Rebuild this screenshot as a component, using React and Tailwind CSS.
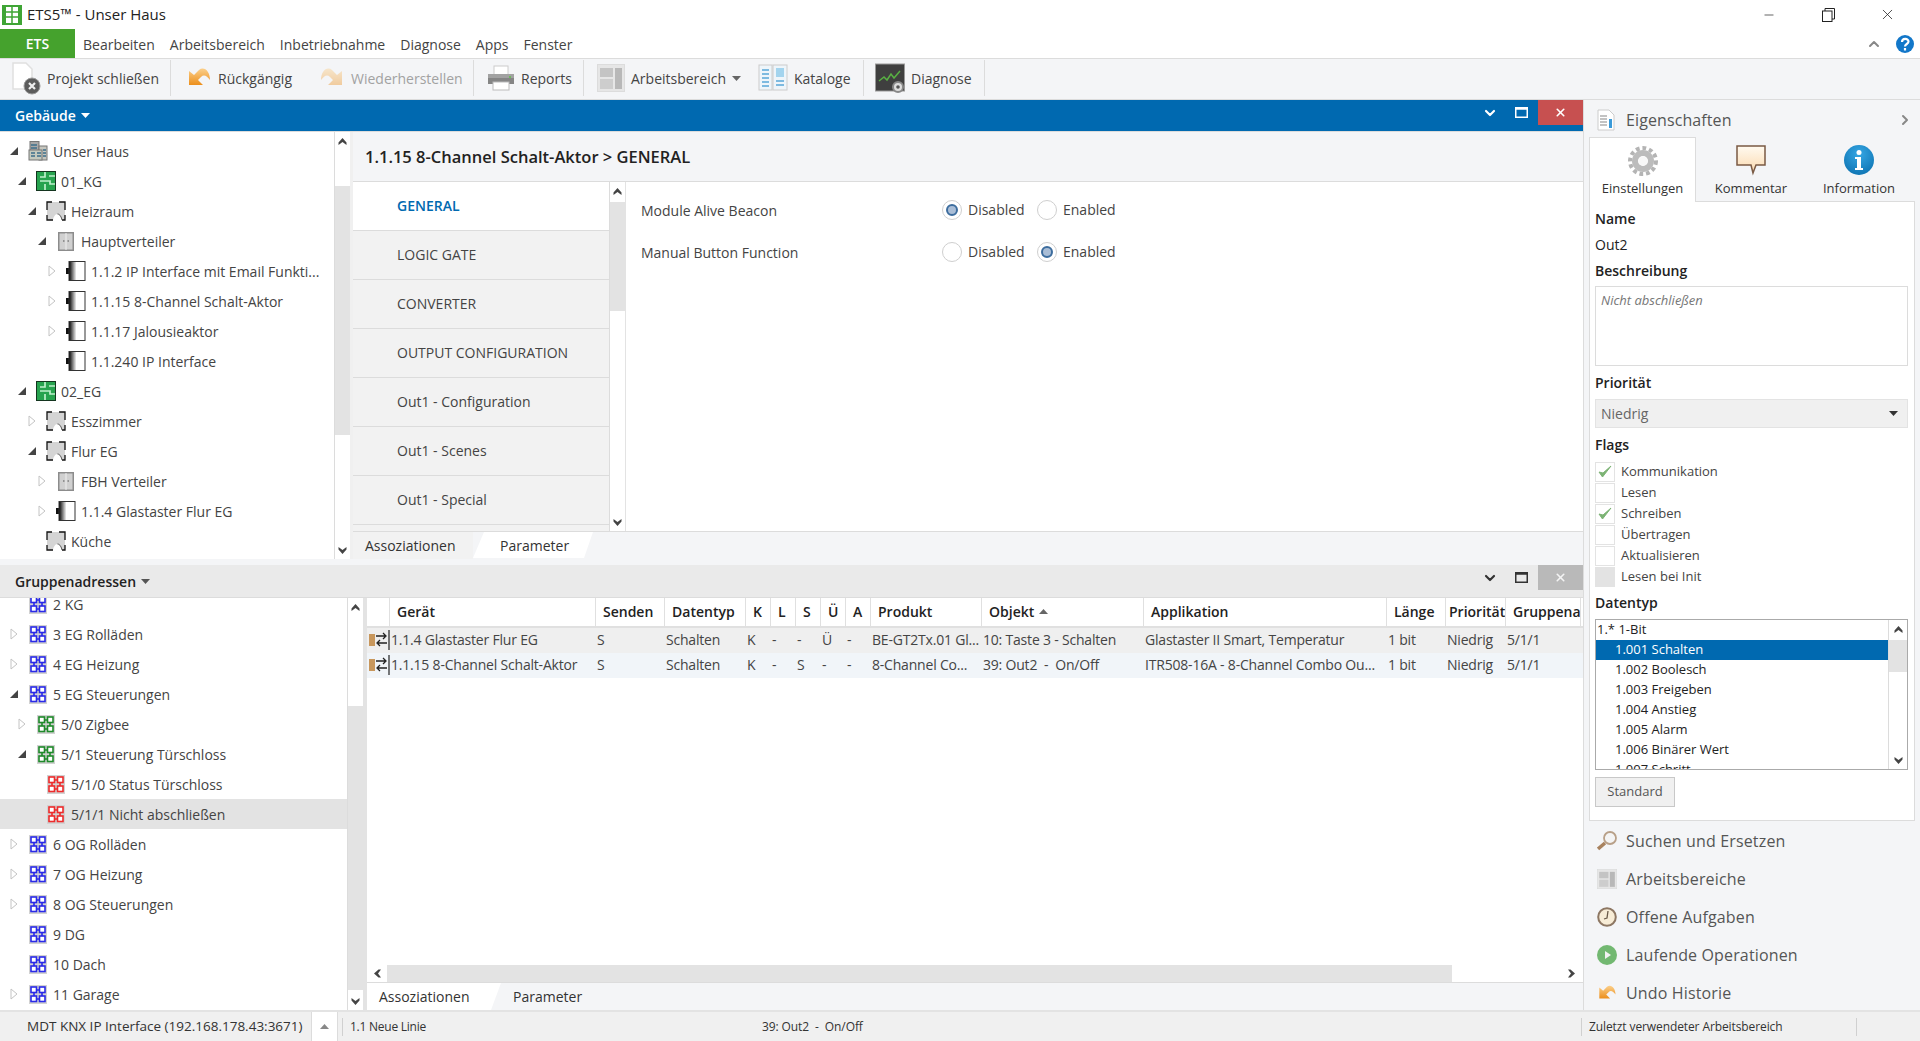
import React from 'react';
import { ChevronRight, ChevronUp, ChevronDown, X, Minus } from 'lucide-react';

const levelPad = ['pl-[10px]', 'pl-[18px]', 'pl-[28px]', 'pl-[38px]', 'pl-[48px]'];

const topTree = [
  { level: 0, state: 'open', icon: 'building', text: 'Unser Haus' },
  { level: 1, state: 'open', icon: 'floor', text: '01_KG' },
  { level: 2, state: 'open', icon: 'room', text: 'Heizraum' },
  { level: 3, state: 'open', icon: 'cabinet', text: 'Hauptverteiler' },
  { level: 4, state: 'closed', icon: 'device', text: '1.1.2 IP Interface mit Email Funkti...' },
  { level: 4, state: 'closed', icon: 'device', text: '1.1.15 8-Channel Schalt-Aktor' },
  { level: 4, state: 'closed', icon: 'device', text: '1.1.17 Jalousieaktor' },
  { level: 4, state: 'none', icon: 'device', text: '1.1.240 IP Interface' },
  { level: 1, state: 'open', icon: 'floor', text: '02_EG' },
  { level: 2, state: 'closed', icon: 'room', text: 'Esszimmer' },
  { level: 2, state: 'open', icon: 'room', text: 'Flur EG' },
  { level: 3, state: 'closed', icon: 'cabinet', text: 'FBH Verteiler' },
  { level: 3, state: 'closed', icon: 'device', text: '1.1.4 Glastaster Flur EG' },
  { level: 2, state: 'none', icon: 'room', text: 'Küche' },
];

const groupTree = [
  { level: 0, state: 'none', icon: 'blue', text: '2 KG' },
  { level: 0, state: 'closed', icon: 'blue', text: '3 EG Rolläden' },
  { level: 0, state: 'closed', icon: 'blue', text: '4 EG Heizung' },
  { level: 0, state: 'open', icon: 'blue', text: '5 EG Steuerungen' },
  { level: 1, state: 'closed', icon: 'green', text: '5/0 Zigbee' },
  { level: 1, state: 'open', icon: 'green', text: '5/1 Steuerung Türschloss' },
  { level: 2, state: 'none', icon: 'red', text: '5/1/0 Status Türschloss' },
  { level: 2, state: 'none', icon: 'red', text: '5/1/1 Nicht abschließen', selected: true },
  { level: 0, state: 'closed', icon: 'blue', text: '6 OG Rolläden' },
  { level: 0, state: 'closed', icon: 'blue', text: '7 OG Heizung' },
  { level: 0, state: 'closed', icon: 'blue', text: '8 OG Steuerungen' },
  { level: 0, state: 'none', icon: 'blue', text: '9 DG' },
  { level: 0, state: 'none', icon: 'blue', text: '10 Dach' },
  { level: 0, state: 'closed', icon: 'blue', text: '11 Garage' },
];

const navItems = ['GENERAL', 'LOGIC GATE', 'CONVERTER', 'OUTPUT CONFIGURATION', 'Out1 - Configuration', 'Out1 - Scenes', 'Out1 - Special'];

const tableHead = ['', 'Gerät', 'Senden', 'Datentyp', 'K', 'L', 'S', 'Ü', 'A', 'Produkt', 'Objekt', 'Applikation', 'Länge', 'Priorität', 'Gruppena'];
const tableRows = [
  ['1.1.4 Glastaster Flur EG', 'S', 'Schalten', 'K', '-', '-', 'Ü', '-', 'BE-GT2Tx.01 Gl...', '10: Taste 3 - Schalten', 'Glastaster II Smart, Temperatur', '1 bit', 'Niedrig', '5/1/1'],
  ['1.1.15 8-Channel Schalt-Aktor', 'S', 'Schalten', 'K', '-', 'S', '-', '-', '8-Channel Co...', '39: Out2  -  On/Off', 'ITR508-16A - 8-Channel Combo Ou...', '1 bit', 'Niedrig', '5/1/1'],
];
const gridCols = 'grid-cols-[23px_206px_69px_81px_25px_25px_25px_25px_25px_111px_162px_243px_59px_60px_75px]';

const flags = [
  { label: 'Kommunikation', checked: true },
  { label: 'Lesen' },
  { label: 'Schreiben', checked: true },
  { label: 'Übertragen' },
  { label: 'Aktualisieren' },
  { label: 'Lesen bei Init', disabled: true },
];

const dataTypes = ['1.002 Boolesch', '1.003 Freigeben', '1.004 Anstieg', '1.005 Alarm', '1.006 Binärer Wert', '1.007 Schritt'];

// --- small drawn icons ---
const BuildingIcon = () => (
  <svg width="20" height="20" viewBox="0 0 20 20">
    <rect x="2" y="0.500" width="9" height="18" fill="#a8a8a8" stroke="#777" />
    <rect x="11" y="5" width="8" height="14" fill="#c6c6be" stroke="#777" />
    <rect x="1" y="9" width="13" height="10" fill="#c4cabe" stroke="#777" />
    <path d="M3 12h4M3 15h4M9 12h4M9 15h4M3 4h6M3 7h6" stroke="#3d6f8a" strokeWidth="1.500" />
    <path d="M15 9h3M15 12h3M15 15h3" stroke="#3d6f8a" strokeWidth="1.500" />
  </svg>
);

const FloorIcon = () => (
  <svg width="20" height="20" viewBox="0 0 20 20">
    <rect x="0.500" y="0.500" width="19" height="19" fill="#27a34f" stroke="#14351f" />
    <path d="M9 1v5H4M9 13v6M4 10h10v3h5M13 5h6" stroke="#bff0cc" strokeWidth="1.700" fill="none" />
  </svg>
);

const RoomIcon = () => (
  <svg width="20" height="20" viewBox="0 0 20 20">
    <rect x="1" y="1" width="18" height="18" fill="#d4d4d4" />
    <path d="M7 19.500c0-3 2-6.500 4.500-6.500s4 3.500 4.500 6.500z" fill="#fff" />
    <path d="M1 9V1h5M13 1h6v8M19 14v5h-3M1 14v5h6" stroke="#111" strokeWidth="1.300" fill="none" />
    <path d="M11.500 13c2.500 0 4 3.500 4.500 6" stroke="#555" strokeWidth="1" fill="none" />
  </svg>
);

const CabinetIcon = () => (
  <svg width="16" height="19" viewBox="0 0 16 19">
    <rect x="0.750" y="0.750" width="14.500" height="17.500" fill="#d0d0d0" stroke="#8c8c8c" strokeWidth="1.500" />
    <path d="M8 1v17" stroke="#f0f0f0" />
    <path d="M5 9h1.500M9.500 9h1.500" stroke="#555" />
  </svg>
);

const DeviceIcon = () => (
  <svg width="20" height="20" viewBox="0 0 20 20">
    <defs>
      <linearGradient id="devGrad" x1="0" x2="1" y1="0" y2="0">
        <stop offset="0" stopColor="#000" />
        <stop offset="1" stopColor="#eee" />
      </linearGradient>
    </defs>
    <rect x="0" y="7" width="3" height="6" fill="#111" />
    <rect x="3" y="0.500" width="7" height="19" fill="url(#devGrad)" />
    <rect x="3" y="0.500" width="16" height="19" fill="none" stroke="#333" />
  </svg>
);

const GroupIcon = ({ color }) => (
  <svg width="18" height="19" viewBox="0 0 18 19">
    <rect width="18" height="19" fill="#d2d2d2" />
    <g fill="#fff" stroke={color} strokeWidth="1.600">
      <rect x="2" y="2" width="5.500" height="5.500" />
      <rect x="10.500" y="2" width="5.500" height="5.500" />
      <rect x="2" y="11" width="5.500" height="5.500" />
      <rect x="10.500" y="11" width="5.500" height="5.500" />
    </g>
    <path d="M7.500 5h3M7.500 14h3M5 7.500V11M13 7.500V11" stroke={color} strokeWidth="1.600" />
  </svg>
);

const treeIcons = {
  building: <BuildingIcon />,
  floor: <FloorIcon />,
  room: <RoomIcon />,
  cabinet: <CabinetIcon />,
  device: <DeviceIcon />,
  blue: <GroupIcon color="#2a2ae8" />,
  green: <GroupIcon color="#1f8a2a" />,
  red: <GroupIcon color="#ee2b2b" />,
};

const Toggle = ({ state }) => (
  <span className="w-[8px] h-[12px] flex items-center justify-center">
    {state === 'open' && (
      <svg width="8" height="8" viewBox="0 0 8 8"><path d="M8 0v8H0z" fill="#444" /></svg>
    )}
    {state === 'closed' && (
      <svg width="8" height="12" viewBox="0 0 8 12"><path d="M1 1l6 5-6 5z" fill="#fff" stroke="#c4c4c4" /></svg>
    )}
  </span>
);

const TreeRow = ({ row }) => (
  <div className={`h-[30px] flex items-center whitespace-nowrap ${levelPad[row.level]} ${row.selected ? 'bg-[#e3e3e3]' : ''}`}>
    <Toggle state={row.state} />
    <span className="w-[10px]" />
    <span className="w-[20px] flex items-center justify-center">{treeIcons[row.icon]}</span>
    <span className="ml-[5px]">{row.text}</span>
  </div>
);

const ArrowUp = () => (
  <svg width="9" height="7" viewBox="0 0 9 7"><path d="M4.500 0L8.500 4.500V7L4.500 4 .5 7V4.500z" fill="#444" /></svg>
);
const ArrowDown = () => (
  <svg width="9" height="7" viewBox="0 0 9 7"><path d="M4.500 7L.5 2.500V0l4 3 4-3v2.500z" fill="#444" /></svg>
);
const ArrowLeft = () => (
  <svg width="7" height="9" viewBox="0 0 7 9"><path d="M0 4.500L4.500 .5H7L4 4.500 7 8.500H4.500z" fill="#444" /></svg>
);
const ArrowRight = () => (
  <svg width="7" height="9" viewBox="0 0 7 9"><path d="M7 4.500L2.500 .5H0l3 4-3 4h2.500z" fill="#444" /></svg>
);

const Caret = ({ color = '#fff', className = '' }) => (
  <svg width="9" height="5" viewBox="0 0 9 5" className={className}><path d="M0 0h9L4.500 5z" fill={color} /></svg>
);

const PaneControls = ({ closeBg, dark, closeFg }) => (
  <div className="flex items-start h-full">
    <ChevronDown size={16} strokeWidth={3.200} color={dark} className="mt-[5px]" />
    <span className="w-[17px]" />
    <svg width="13" height="11" viewBox="0 0 13 11" className="mt-[7px]">
      <rect x="0.750" y="0.750" width="11.500" height="9.500" fill="none" stroke={dark} strokeWidth="1.500" />
      <rect x="0.750" y="0.750" width="11.500" height="2" fill={dark} />
    </svg>
    <span className="w-[10px]" />
    <div className={`w-[45px] h-[25px] flex items-center justify-center ${closeBg}`}>
      <X size={13} strokeWidth={3} color={closeFg} />
    </div>
  </div>
);

const PageIcon = () => (
  <svg width="30" height="34" viewBox="0 0 30 34">
    <path d="M2 2h13l6 6v20H2z" fill="#fff" stroke="#e0e0e0" strokeWidth="1.500" />
    <circle cx="21" cy="25" r="8" fill="#5c5c5c" stroke="#9a9a9a" />
    <path d="M18 22l6 6M24 22l-6 6" stroke="#eee" strokeWidth="2.200" />
  </svg>
);

const arrowPath = 'M24 15C24 6 18 1 13 5L8 10 3 6v14h14l-5-5 3-3c3-3 6-1 9 3z';

const UndoIcon = ({ size = 26 }) => (
  <svg width={size} height={size} viewBox="0 0 26 26">
    <defs>
      <linearGradient id="undoGrad" x1="0" x2="0" y1="0" y2="1">
        <stop offset="0" stopColor="#fbcf8a" />
        <stop offset="1" stopColor="#ec8f1c" />
      </linearGradient>
    </defs>
    <path d={arrowPath} fill="url(#undoGrad)" />
  </svg>
);

const RedoIcon = () => (
  <svg width="26" height="26" viewBox="0 0 26 26" className="opacity-40 -scale-x-100">
    <path d={arrowPath} fill="url(#undoGrad)" />
  </svg>
);

const PrinterIcon = () => (
  <svg width="28" height="26" viewBox="0 0 28 26">
    <rect x="7" y="1" width="14" height="9" fill="#fff" stroke="#ccc" />
    <rect x="1" y="9" width="26" height="10" fill="#a2a2a2" />
    <rect x="1" y="13" width="26" height="6" fill="#858585" />
    <rect x="6" y="17" width="16" height="8" fill="#fff" stroke="#bbb" />
    <rect x="22" y="11" width="2" height="2" fill="#6dbb5c" />
  </svg>
);

const LayoutIcon = ({ size = 28 }) => (
  <svg width={size} height={size} viewBox="0 0 28 28">
    <rect x="0.500" y="0.500" width="27" height="27" fill="#e6e6e6" stroke="#dcdcdc" />
    <rect x="3" y="4" width="13" height="9" fill="#c4c4c4" />
    <rect x="3" y="15" width="13" height="10" fill="#cdcdcd" />
    <rect x="18" y="4" width="7" height="21" fill="#b8b8b8" />
  </svg>
);

const BookIcon = () => (
  <svg width="30" height="28" viewBox="0 0 30 28">
    <rect x="1" y="1" width="13" height="25" fill="#eef5fa" stroke="#ccc" />
    <rect x="15" y="1" width="14" height="25" fill="#eef5fa" stroke="#ccc" />
    <path d="M4 6h7M4 10h7M4 14h7M4 18h7M4 22h7" stroke="#58a6d8" strokeWidth="1.400" />
    <rect x="18" y="4" width="8" height="9" fill="#a3d4ee" />
    <path d="M18 17h8M18 21h8" stroke="#58a6d8" strokeWidth="1.400" />
  </svg>
);

const ChartIcon = () => (
  <svg width="30" height="30" viewBox="0 0 30 30">
    <rect x="0.500" y="1" width="29" height="27" fill="#3f3f3f" stroke="#999" />
    <path d="M4 18l5-4 3 3 4-6 3 4 6-7" stroke="#58b043" strokeWidth="1.500" fill="none" />
    <circle cx="23" cy="24" r="5" fill="#ddd" stroke="#888" strokeWidth="2" />
    <circle cx="23" cy="24" r="1.800" fill="#555" />
  </svg>
);

const AppLogo = () => (
  <svg width="20" height="20" viewBox="0 0 20 20">
    <rect width="20" height="20" fill="#3fa535" />
    <rect x="4" y="2" width="12" height="16" fill="#fff" />
    <path d="M10 2v16M4 7h12M4 12h12" stroke="#3fa535" strokeWidth="1.500" />
  </svg>
);

const GearIcon = () => (
  <svg width="30" height="30" viewBox="0 0 30 30">
    <circle cx="15" cy="15" r="13" fill="none" stroke="#b4b4b4" strokeWidth="4" strokeDasharray="3.800 2.900" />
    <circle cx="15" cy="15" r="8" fill="none" stroke="#bcbcbc" strokeWidth="6" />
    <circle cx="15" cy="15" r="4.500" fill="#f8f8f8" />
  </svg>
);

const CommentIcon = () => (
  <svg width="30" height="32" viewBox="0 0 30 32">
    <defs>
      <linearGradient id="noteGrad" x1="0" x2="0" y1="0" y2="1">
        <stop offset="0" stopColor="#fffaf0" />
        <stop offset="1" stopColor="#fbd9ae" />
      </linearGradient>
    </defs>
    <path d="M1 2h28v19H20l-3 8-2-8H1z" fill="url(#noteGrad)" stroke="#7a5a44" strokeWidth="1.500" />
  </svg>
);

const InfoIcon = () => (
  <svg width="30" height="30" viewBox="0 0 30 30">
    <defs>
      <radialGradient id="infoGrad" cx="0.500" cy="0.300" r="0.800">
        <stop offset="0" stopColor="#36a7e4" />
        <stop offset="1" stopColor="#0a6fae" />
      </radialGradient>
    </defs>
    <circle cx="15" cy="15" r="15" fill="url(#infoGrad)" />
    <circle cx="15" cy="7.500" r="2.500" fill="#fff" />
    <path d="M11 12h6v11h2v2h-8v-2h2v-9h-2z" fill="#fff" />
  </svg>
);

const HelpIcon = () => (
  <svg width="18" height="18" viewBox="0 0 18 18">
    <circle cx="9" cy="9" r="9" fill="#1277c9" />
    <path d="M6 7c0-4 6.500-4 6.500-.500 0 2.500-3.500 2.500-3.500 5" fill="none" stroke="#fff" strokeWidth="2.200" />
    <rect x="7.900" y="13" width="2.200" height="2.500" fill="#fff" />
  </svg>
);

const PropsIcon = () => (
  <svg width="18" height="22" viewBox="0 0 18 22">
    <path d="M1 1h11l5 5v15H1z" fill="#fff" stroke="#ccc" />
    <path d="M3 7h7M3 10h7M3 13h7M3 16h7" stroke="#888" strokeWidth="1.200" />
    <rect x="12" y="10" width="3" height="9" fill="#3a9ad9" />
  </svg>
);

const SearchIcon = () => (
  <svg width="20" height="22" viewBox="0 0 20 22">
    <circle cx="13" cy="8" r="6" fill="#f4f4f4" stroke="#b8a088" strokeWidth="1.800" />
    <path d="M8 13l-7 6" stroke="#a8825e" strokeWidth="3.500" />
  </svg>
);

const ClockIcon = () => (
  <svg width="20" height="20" viewBox="0 0 20 20">
    <circle cx="10" cy="10" r="8.800" fill="#f7ecd6" stroke="#8d7763" strokeWidth="2" />
    <path d="M11 4l-1 7-3 1" stroke="#6a5a48" strokeWidth="1.300" fill="none" />
  </svg>
);

const PlayIcon = () => (
  <svg width="20" height="20" viewBox="0 0 20 20">
    <circle cx="10" cy="10" r="10" fill="#72b871" />
    <path d="M8 6l6 4-6 4z" fill="#f2f2f2" />
  </svg>
);

const CheckIcon = () => (
  <svg width="14" height="14" viewBox="0 0 14 14">
    <path d="M1 7l3.500 5L13 1 5 8z" fill="#7cb374" stroke="#7cb374" strokeLinejoin="round" />
  </svg>
);

const Radio = ({ checked }) => (
  <span className="w-[20px] h-[20px] rounded-full border border-[#cfcfcf] bg-white flex items-center justify-center">
    {checked && <span className="w-[12px] h-[12px] rounded-full bg-[#a9bdd6] border-2 border-[#3d6d9e]" />}
  </span>
);

const RadioRow = ({ label, selected, className }) => (
  <div className={`flex items-center ${className}`}>
    <span className="w-[316px] pl-[15px] translate-y-[1px]">{label}</span>
    <Radio checked={selected === 0} />
    <span className="ml-[6px] w-[69px]">Disabled</span>
    <Radio checked={selected === 1} />
    <span className="ml-[6px]">Enabled</span>
  </div>
);

const ToolButton = ({ icon, label, className = '', muted, children }) => (
  <div className={`flex items-center h-full ${className}`}>
    {icon}
    <span className={`ml-[6px] ${muted ? 'text-[#a2a2a2]' : 'text-[#444]'}`}>{label}</span>
    {children}
  </div>
);

const ToolSep = () => <span className="w-px h-[36px] bg-[#dcdcdc]" />;

const PaneTabs = ({ active }) => (
  <div className="h-[27px] flex bg-[#f4f5f7]">
    {active === 'left' ? (
      <>
        <div className="w-[134px] h-[27px] bg-white pl-[12px] flex items-center [clip-path:polygon(0_0,100%_0,calc(100%-10px)_100%,0_100%)]">Assoziationen</div>
        <div className="ml-[12px] flex items-center">Parameter</div>
      </>
    ) : (
      <>
        <div className="w-[120px] bg-[#f2f2f2] pl-[12px] flex items-center">Assoziationen</div>
        <div className="w-[120px] h-[26px] bg-white pl-[27px] flex items-center [clip-path:polygon(11px_0,100%_0,calc(100%-9px)_100%,0_100%)]">Parameter</div>
      </>
    )}
  </div>
);

const VScroll = ({ top, thumb, className }) => (
  <div className={`w-[16px] flex flex-col items-center bg-white border-l border-[#dcdcdc] ${className}`}>
    <div className={`w-full flex justify-center pt-[6px] shrink-0 ${top}`}><ArrowUp /></div>
    <div className={`w-full shrink-0 bg-[#e3e3e3] ${thumb}`} />
    <div className="flex-1" />
    <div className="pb-[5px]"><ArrowDown /></div>
  </div>
);

export default function App() {
  return (
    <div className="w-[1920px] h-[1041px] overflow-hidden flex flex-col bg-[#f4f5f7] text-[#333] text-[14px] font-['Open_Sans',sans-serif]">
      {/* Title bar */}
      <div className="h-[29px] bg-white flex items-center shrink-0">
        <span className="ml-[2px]"><AppLogo /></span>
        <span className="ml-[5px] text-[15px] text-[#222]">ETS5™ - Unser Haus</span>
        <div className="ml-auto flex items-center text-[#222]">
          <Minus size={14} strokeWidth={1.200} />
          <span className="w-[46px]" />
          <svg width="13" height="14" viewBox="0 0 13 14">
            <rect x="0.500" y="3" width="9.500" height="10.500" fill="#fff" stroke="#222" />
            <path d="M3 3V.5h9.500v10.500H10" fill="none" stroke="#222" />
          </svg>
          <span className="w-[44px]" />
          <X size={17} strokeWidth={1.100} className="mr-[24px]" />
        </div>
      </div>

      {/* Menu */}
      <div className="h-[30px] bg-white flex items-center shrink-0 border-b border-[#dcdcdc]">
        <div className="w-[75px] h-full bg-[#45a22d] text-white font-semibold flex items-center justify-center">ETS</div>
        <div className="ml-[8px] pt-[2px] flex gap-[15px] text-[#444]">
          <span>Bearbeiten</span>
          <span>Arbeitsbereich</span>
          <span>Inbetriebnahme</span>
          <span>Diagnose</span>
          <span>Apps</span>
          <span>Fenster</span>
        </div>
        <div className="ml-auto flex items-center">
          <ChevronUp size={16} strokeWidth={3} color="#888" />
          <span className="w-[14px]" />
          <HelpIcon />
          <span className="w-[6px]" />
        </div>
      </div>

      {/* Toolbar */}
      <div className="h-[41px] pb-[2px] flex items-center bg-[#f4f5f7] shrink-0 border-b border-[#dcdcdc]">
        <ToolButton icon={<PageIcon />} label="Projekt schließen" className="w-[170px] pl-[11px]" />
        <ToolSep />
        <ToolButton icon={<UndoIcon />} label="Rückgängig" className="w-[148px] pl-[15px]" />
        <ToolButton icon={<RedoIcon />} label="Wiederherstellen" muted className="w-[154px]" />
        <ToolSep />
        <ToolButton icon={<PrinterIcon />} label="Reports" className="w-[109px] pl-[13px]" />
        <ToolSep />
        <ToolButton icon={<LayoutIcon />} label="Arbeitsbereich" className="w-[174px] pl-[13px]">
          <Caret color="#666" className="ml-[6px]" />
        </ToolButton>
        <ToolButton icon={<BookIcon />} label="Kataloge" className="w-[105px]" />
        <ToolSep />
        <ToolButton icon={<ChartIcon />} label="Diagnose" className="w-[120px] pl-[11px]" />
        <ToolSep />
      </div>

      <div className="flex-1 flex min-h-0">
        {/* Left side */}
        <div className="w-[1583px] flex flex-col shrink-0">
          {/* Upper pane */}
          <div className="h-[32px] bg-[#0069b0] border-b border-[#dcdcdc] flex items-start justify-between shrink-0">
            <div className="pl-[15px] h-full flex items-center text-white font-semibold gap-[5px]">
              <span>Gebäude</span>
              <Caret />
            </div>
            <PaneControls closeBg="bg-[#c75050]" dark="#fff" closeFg="#fff" />
          </div>

          <div className="h-[427px] flex shrink-0">
            <div className="w-[334px] bg-white pt-[4px] overflow-hidden text-[#444]">
              {topTree.map((row, i) => <TreeRow key={i} row={row} />)}
            </div>
            <VScroll top="h-[54px]" thumb="h-[249px]" />
            <div className="w-[3px] bg-[#f0f0f0]" />
            <div className="flex-1 flex flex-col min-w-0">
              <div className="h-[50px] pt-[2px] border-b border-[#dcdcdc] pl-[12px] flex items-center text-[16.500px] font-semibold text-[#222] shrink-0">
                1.1.15 8-Channel Schalt-Aktor &gt; GENERAL
              </div>
              <div className="flex-1 flex bg-white min-h-0 border-b border-[#dcdcdc]">
                <div className="w-[256px] overflow-hidden bg-[#f2f2f2]">
                  {navItems.map((item, i) => (
                    <div
                      key={item}
                      className={`h-[49px] pl-[44px] pb-[2px] flex items-center border-b border-[#dcdcdc] ${i === 0 ? 'bg-white text-[#0069b0] font-semibold' : 'text-[#444]'}`}
                    >
                      {item}
                    </div>
                  ))}
                </div>
                <VScroll top="h-[20px]" thumb="h-[109px]" />
                <div className="flex-1 border-l border-[#e3e3e3] pt-[17px] text-[#444]">
                  <RadioRow label="Module Alive Beacon" selected={0} />
                  <RadioRow label="Manual Button Function" selected={1} className="mt-[21px]" />
                </div>
              </div>
              <PaneTabs active="right" />
            </div>
          </div>

          <div className="h-[6px] shrink-0" />

          {/* Lower pane */}
          <div className="h-[33px] bg-[#eaeaea] border-b border-[#dcdcdc] flex items-start justify-between shrink-0">
            <div className="pl-[15px] h-full flex items-center text-[#222] font-semibold gap-[5px]">
              <span>Gruppenadressen</span>
              <Caret color="#555" />
            </div>
            <PaneControls closeBg="bg-[#b9b9b9]" dark="#333" closeFg="#f4f4f4" />
          </div>

          <div className="flex-1 flex min-h-0">
            <div className="w-[347px] bg-white overflow-hidden text-[#444]">
              <div className="-mt-[9px]">
                {groupTree.map((row, i) => <TreeRow key={i} row={row} />)}
              </div>
            </div>
            <VScroll top="h-[108px]" thumb="h-[284px]" />
            <div className="w-[4px] bg-[#e3e3e3]" />
            <div className="flex-1 flex flex-col min-w-0 bg-white">
              <div className={`grid ${gridCols} h-[30px] font-semibold text-[#222] border-b-2 border-[#e0e0e0] shrink-0`}>
                {tableHead.map((head, i) => (
                  <div key={i} className={`pb-[2px] flex items-center gap-[5px] whitespace-nowrap overflow-hidden border-r border-[#e0e0e0] ${head === 'Priorität' ? 'pl-[3px]' : 'pl-[7px]'}`}>
                    {head}
                    {head === 'Objekt' && <Caret color="#666" className="rotate-180" />}
                  </div>
                ))}
              </div>
              {tableRows.map((row, r) => (
                <div key={r} className={`grid ${gridCols} h-[25px] pb-[2px] text-[#444] tracking-[-0.200px] shrink-0 ${r === 0 ? 'bg-[#efefef]' : 'bg-[#f1f5f9]'}`}>
                  <div className="flex items-center pl-[2px]">
                    <span className="w-[6px] h-[12px] bg-[#c8975c]" />
                    <svg width="14" height="20" viewBox="0 0 14 20" className="ml-[1px]">
                      <path d="M0 6h9M7 3l3 3-3 3M11 13H2M4 10l-3 3 3 3" stroke="#222" strokeWidth="1.300" fill="none" />
                      <path d="M13 0v20" stroke="#222" strokeWidth="1.200" />
                    </svg>
                  </div>
                  {row.map((cell, i) => (
                    <div key={i} className="pl-[1px] flex items-center whitespace-pre overflow-hidden">{cell}</div>
                  ))}
                </div>
              ))}
              <div className="flex-1" />
              <div className="h-[18px] flex bg-white border-b border-[#dcdcdc] shrink-0">
                <div className="w-[20px] flex items-center justify-center"><ArrowLeft /></div>
                <div className="w-[1065px] bg-[#e3e3e3]" />
                <div className="flex-1 flex items-center justify-end pr-[8px]"><ArrowRight /></div>
              </div>
              <PaneTabs active="left" />
            </div>
          </div>
        </div>

        {/* Properties */}
        <div className="flex-1 flex flex-col border-l border-[#dcdcdc] min-w-0 pl-[5px] pr-[5px]">
          <div className="h-[36px] flex items-center shrink-0 pt-[3px]">
            <span className="ml-[8px]"><PropsIcon /></span>
            <span className="ml-[11px] text-[16px] tracking-[0.100px] text-[#555]">Eigenschaften</span>
            <ChevronRight size={16} strokeWidth={3} color="#888" className="ml-auto mr-[2px]" />
          </div>
          <div className="h-[65px] flex shrink-0">
            <div className="w-[107px] bg-white border border-b-0 border-[#dcdcdc] flex flex-col items-center pt-[8px] relative top-px">
              <GearIcon />
              <span className="mt-[3px] text-[13px]">Einstellungen</span>
            </div>
            <div className="w-[110px] flex flex-col items-center pt-[8px]">
              <CommentIcon />
              <span className="mt-[3px] text-[13px]">Kommentar</span>
            </div>
            <div className="w-[106px] flex flex-col items-center pt-[9px]">
              <InfoIcon />
              <span className="mt-[4px] text-[13px]">Information</span>
            </div>
          </div>
          <div className="h-[620px] bg-white border border-[#dcdcdc] pl-[5px] pr-[6px] shrink-0 text-[#222]">
            <div className="h-[32px] flex items-center font-semibold">Name</div>
            <div className="h-[21px] flex items-center">Out2</div>
            <div className="h-[31px] flex items-center font-semibold">Beschreibung</div>
            <div className="h-[80px] border border-[#dcdcdc] pl-[5px] pt-[4px] italic text-[13px] text-[#777]">Nicht abschließen</div>
            <div className="h-[33px] flex items-center font-semibold">Priorität</div>
            <div className="h-[29px] bg-[#f0f0f0] border border-[#e3e3e3] pl-[5px] pr-[9px] flex items-center justify-between text-[#666]">
              Niedrig
              <Caret color="#333" />
            </div>
            <div className="h-[33px] flex items-center font-semibold">Flags</div>
            <div>
              {flags.map((flag) => (
                <div key={flag.label} className="h-[21px] flex items-center text-[13px] text-[#444]">
                  <span className={`w-[20px] h-[20px] flex items-center justify-center border ${flag.disabled ? 'bg-[#e3e3e3] border-[#e3e3e3]' : 'border-[#e3e3e3]'}`}>
                    {flag.checked && <CheckIcon />}
                  </span>
                  <span className="ml-[6px]">{flag.label}</span>
                </div>
              ))}
            </div>
            <div className="h-[32px] pb-[1px] flex items-center font-semibold">Datentyp</div>
            <div className="h-[151px] border border-[#aaaaaa] flex overflow-hidden text-[13px]">
              <div className="flex-1 min-w-0">
                <div className="h-[20px] pl-[1px] flex items-center">1.* 1-Bit</div>
                <div className="h-[20px] pl-[19px] flex items-center bg-[#0069b0] text-white">1.001 Schalten</div>
                {dataTypes.map((item) => (
                  <div key={item} className="h-[20px] pl-[19px] flex items-center">{item}</div>
                ))}
              </div>
              <VScroll top="h-[20px]" thumb="h-[32px]" className="w-[19px] shrink-0" />
            </div>
            <div className="mt-[7px] w-[80px] h-[30px] bg-[#f0f0f0] border border-[#c8c8c8] text-[13px] text-[#555] flex items-center justify-center">Standard</div>
          </div>
          <div className="flex flex-col text-[16px] tracking-[0.150px] text-[#555] pt-[1px]">
            <div className="h-[38px] flex items-center gap-[9px] pl-[8px]"><SearchIcon />Suchen und Ersetzen</div>
            <div className="h-[38px] flex items-center gap-[9px] pl-[8px]"><LayoutIcon size={20} />Arbeitsbereiche</div>
            <div className="h-[38px] flex items-center gap-[9px] pl-[8px]"><ClockIcon />Offene Aufgaben</div>
            <div className="h-[38px] flex items-center gap-[9px] pl-[8px]"><PlayIcon />Laufende Operationen</div>
            <div className="h-[38px] flex items-center gap-[9px] pl-[8px]"><UndoIcon size={20} />Undo Historie</div>
          </div>
        </div>
      </div>

      {/* Status bar */}
      <div className="h-[31px] bg-[#f0f0f0] border-t-2 border-[#e3e3e3] flex items-center text-[12px] text-[#333] shrink-0">
        <span className="w-[311px] pl-[27px] text-[13.500px] whitespace-nowrap">MDT KNX IP Interface (192.168.178.43:3671)</span>
        <div className="w-[27px] h-full bg-white border-x border-[#dcdcdc] flex items-center justify-center">
          <Caret color="#888" className="rotate-180" />
        </div>
        <span className="w-px h-[18px] ml-[4px] bg-[#d0d0d0]" />
        <span className="ml-[7px] w-[412px] tracking-[-0.250px]">1.1 Neue Linie</span>
        <span className="w-[819px] whitespace-pre tracking-[-0.100px]">39: Out2  -  On/Off</span>
        <span className="w-px h-[18px] bg-[#d0d0d0]" />
        <span className="ml-[7px] w-[267px] tracking-[-0.100px]">Zuletzt verwendeter Arbeitsbereich</span>
        <span className="w-px h-[18px] bg-[#d0d0d0]" />
      </div>
    </div>
  );
}
